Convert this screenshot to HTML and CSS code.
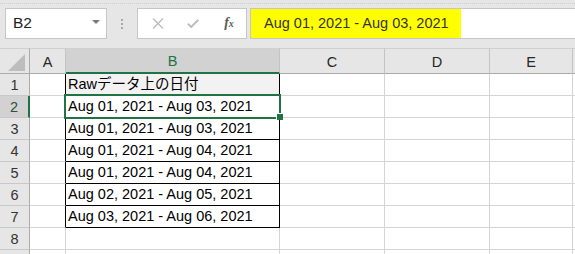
FILE: index.html
```html
<!DOCTYPE html>
<html lang="ja">
<head>
<meta charset="utf-8">
<title>Sheet</title>
<link rel="stylesheet" href="styles.css">
</head>
<body>
<div class="toolbar">
  <div class="tbrow">
    <div class="namebox"><span class="ref">B2</span><span class="arrow"></span></div>
    <div class="sep"><span></span><span></span><span></span></div>
    <div class="fbtns">
      <span class="slot s1"><svg width="12" height="11" viewBox="0 0 12 11"><path d="M1 0.5 L11 10.5 M11 0.5 L1 10.5" stroke="#bdbdbd" stroke-width="1.4" fill="none"/></svg></span>
      <span class="slot s2"><svg width="12" height="9" viewBox="0 0 12 9"><path d="M0.8 4.6 L4.2 8 L11.4 0.8" stroke="#bdbdbd" stroke-width="2" fill="none"/></svg></span>
      <span class="slot s3"><span class="fx">f<span class="fxx">x</span></span></span>
    </div>
    <div class="finput"><span class="hl">Aug 01, 2021 - Aug 03, 2021</span></div>
  </div>
</div>
<div class="sheet">
  <div class="hd corner"><span class="tri"></span></div>
  <div class="hd ch">A</div>
  <div class="hd ch chsel">B</div>
  <div class="hd ch">C</div>
  <div class="hd ch">D</div>
  <div class="hd ch">E</div>
  <div class="hd ch chrest"></div>

  <div class="rh">1</div><div class="c ca">&nbsp;</div><div class="c cb b1">Rawデータ上の日付</div><div class="c"></div><div class="c"></div><div class="c"></div><div class="c"></div>
  <div class="rh rhsel">2</div><div class="c ca"></div><div class="c cb">Aug 01, 2021 - Aug 03, 2021</div><div class="c"></div><div class="c"></div><div class="c"></div><div class="c"></div>
  <div class="rh">3</div><div class="c ca"></div><div class="c cb">Aug 01, 2021 - Aug 03, 2021</div><div class="c"></div><div class="c"></div><div class="c"></div><div class="c"></div>
  <div class="rh">4</div><div class="c ca"></div><div class="c cb">Aug 01, 2021 - Aug 04, 2021</div><div class="c"></div><div class="c"></div><div class="c"></div><div class="c"></div>
  <div class="rh">5</div><div class="c ca"></div><div class="c cb">Aug 01, 2021 - Aug 04, 2021</div><div class="c"></div><div class="c"></div><div class="c"></div><div class="c"></div>
  <div class="rh">6</div><div class="c ca"></div><div class="c cb">Aug 02, 2021 - Aug 05, 2021</div><div class="c"></div><div class="c"></div><div class="c"></div><div class="c"></div>
  <div class="rh">7</div><div class="c ca"></div><div class="c cb">Aug 03, 2021 - Aug 06, 2021</div><div class="c"></div><div class="c"></div><div class="c"></div><div class="c"></div>
  <div class="rh">8</div><div class="c"></div><div class="c"></div><div class="c"></div><div class="c"></div><div class="c"></div><div class="c"></div>
  <div class="rh rhlast"></div><div class="c"></div><div class="c"></div><div class="c"></div><div class="c"></div><div class="c"></div><div class="c"></div>

  <div class="sel"><span class="handle"></span></div>
</div>
</body>
</html>
```
FILE: styles.css
```css
* { box-sizing: border-box; }
html, body {
  margin: 0;
  padding: 0;
  width: 575px;
  height: 254px;
  overflow: hidden;
  background: #ffffff;
  font-family: "Liberation Sans", Arial, "Noto Sans CJK JP", sans-serif;
}

.toolbar {
  background: #e6e6e6;
  padding-top: 3px;
  height: 48px;
}
.tbrow {
  border-top: 1px dotted #cfcfcf;
  display: flex;
  align-items: flex-start;
  padding: 4px 0 0 5px;
}
.namebox {
  width: 102px;
  height: 31px;
  background: #fff;
  border: 1px solid #c6c6c6;
  display: flex;
  align-items: center;
  justify-content: space-between;
  padding: 0 6px 1px 7px;
}
.ref {
  font-size: 15.5px;
  color: #222;
}
.arrow {
  width: 0;
  height: 0;
  border-left: 4px solid transparent;
  border-right: 4px solid transparent;
  border-top: 4px solid #7a7a7a;
  margin-top: -2px;
}
.sep {
  width: 30px;
  height: 31px;
  display: flex;
  flex-direction: column;
  align-items: center;
  justify-content: center;
  gap: 2px;
}
.sep span {
  width: 2px;
  height: 2px;
  background: #a8a8a8;
}
.fbtns {
  width: 110px;
  height: 31px;
  background: #fff;
  border: 1px solid #c6c6c6;
  display: flex;
  align-items: center;
}
.slot {
  display: flex;
  align-items: center;
  justify-content: center;
  height: 100%;
}
.s1 { width: 38px; padding-left: 1px; }
.s2 { width: 30px; padding-left: 3px; }
.s3 { width: 40px; padding-left: 6px; }
.fx {
  font-family: "Liberation Serif", "Times New Roman", serif;
  font-style: italic;
  font-weight: bold;
  font-size: 14px;
  color: #5a5a5a;
  margin-top: -2px;
}
.fxx { font-size: 10px; }
.finput {
  flex: 1;
  height: 31px;
  margin-left: 3px;
  background: #fff;
  border: 1px solid #c6c6c6;
  border-right: none;
}
.hl {
  display: block;
  width: 210px;
  height: 29px;
  background: #ffff00;
  padding-left: 13px;
  font-size: 14.5px;
  line-height: 29px;
  color: #333;
  white-space: nowrap;
}

.sheet {
  position: relative;
  display: grid;
  grid-template-columns: 30px 36px 214px 105px 105px 83px 1fr;
  grid-template-rows: 26px repeat(8, 22px) 6px;
  background: #fff;
}
.hd {
  background: #e6e6e6;
  border-top: 1px solid #d0d0d0;
  border-bottom: 1px solid #ababab;
  border-right: 1px solid #c4c4c4;
  font-size: 14.5px;
  color: #262626;
  display: flex;
  align-items: center;
  justify-content: center;
  padding-top: 1px;
}
.corner {
  border-right-color: #ababab;
  position: relative;
}
.tri {
  position: absolute;
  right: 4px;
  bottom: 2px;
  width: 0;
  height: 0;
  border-left: 17px solid transparent;
  border-bottom: 17px solid #bdbdbd;
}
.chsel {
  background: #d2d2d2;
  color: #217346;
  border-bottom: 2px solid #217346;
}
.chrest { border-right: none; }

.rh {
  background: #e6e6e6;
  border-right: 1px solid #ababab;
  border-bottom: 1px solid #c8c8c8;
  font-size: 14.5px;
  color: #333;
  display: flex;
  align-items: center;
  justify-content: center;
  padding-top: 1px;
}
.rhsel {
  background: #d2d2d2;
  color: #2f4f3f;
  border-right: 2px solid #217346;
}
.rhlast { border-bottom: none; }
.c {
  border-right: 1px solid #d4d4d4;
  border-bottom: 1px solid #d4d4d4;
  font-size: 14.5px;
  line-height: 21px;
  color: #000;
  white-space: nowrap;
  overflow: hidden;
  padding-left: 2px;
}
.ca { border-right-color: #000; }
.cb {
  border-right-color: #000;
  border-bottom-color: #000;
}
.b1 { background: #f2f2f2; }

.sel {
  position: absolute;
  left: 64px;
  top: 46px;
  width: 217px;
  height: 25px;
  border: 2px solid #217346;
}
.handle {
  position: absolute;
  right: -4px;
  bottom: -3px;
  width: 7px;
  height: 7px;
  background: #217346;
  border-left: 1px solid #fff;
  border-top: 1px solid #fff;
}
```
